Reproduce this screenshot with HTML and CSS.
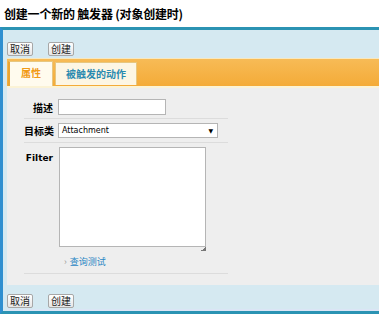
FILE: index.html
```html
<!DOCTYPE html>
<html lang="zh">
<head>
    <meta charset="UTF-8">
    <title>创建触发器</title>
    <link rel="stylesheet" href="styles.css">
</head>
<body>
    <h2 class="page-title">创建一个新的 触发器 (对象创建时)</h2>

    <div class="panel">
        <div class="toolbar">
            <button type="button" class="btn">取消</button>
            <button type="button" class="btn">创建</button>
        </div>

        <div class="tabs">
            <div class="tab active">属性</div>
            <div class="tab">被触发的动作</div>
        </div>

        <div class="tab-body">
            <div class="form-row">
                <label class="field-label" for="desc">描述</label>
                <input type="text" id="desc" class="text-input">
            </div>
            <div class="form-row">
                <label class="field-label" for="target">目标类</label>
                <div class="select-box" id="target">
                    <span>Attachment</span>
                    <span class="arrow">▼</span>
                </div>
            </div>
            <div class="form-row filter-row">
                <label class="field-label" for="filter">Filter</label>
                <div class="filter-field">
                    <div class="textarea-wrap">
                        <textarea id="filter" class="filter-input"></textarea>
                        <span class="grip"></span>
                    </div>
                    <a class="test-link" href="#"><span class="bullet">›</span>查询测试</a>
                </div>
            </div>
        </div>

        <div class="toolbar bottom">
            <button type="button" class="btn">取消</button>
            <button type="button" class="btn">创建</button>
        </div>
    </div>
</body>
</html>
```

FILE: styles.css
```css
body {
    margin: 0;
    padding: 0;
    background: #fff;
    font-family: "Noto Sans CJK SC", "DejaVu Sans", sans-serif;
    color: #000;
}

.page-title {
    margin: 0;
    height: 27px;
    padding: 6px 0 0 4px;
    box-sizing: border-box;
    font-size: 12px;
    line-height: 15px;
    font-weight: bold;
    letter-spacing: -0.2px;
}

.panel {
    border-top: 3px solid #2b93b3;
    border-bottom: 3px solid #2b93b3;
    border-left: 3px solid #2f8fd0;
    background: #d5e9f1;
    padding-left: 4px;
}

.toolbar {
    display: flex;
    gap: 15px;
    padding: 12px 0 2px 0;
}

.toolbar.bottom {
    padding: 9px 0 1px 0;
    border-bottom: 2px solid #dbe5f5;
}

.btn {
    font-family: "Noto Sans CJK SC", sans-serif;
    font-size: 10px;
    line-height: 12px;
    height: 14px;
    width: 26px;
    padding: 0;
    border: 1px solid #a7a7a7;
    border-radius: 2px;
    background: linear-gradient(#ffffff, #e6e6e6);
    color: #222;
}

.tabs {
    display: flex;
    gap: 2px;
    align-items: flex-end;
    height: 30px;
    padding-left: 1px;
    box-sizing: border-box;
    background: linear-gradient(#f7bb56, #f4ab38);
    border-top: 1px solid #f7e8c0;
    border-bottom: 2px solid #fbf3d6;
}

.tab {
    height: 23px;
    padding: 0;
    font-size: 10px;
    line-height: 21px;
    font-weight: bold;
    white-space: nowrap;
    color: #2a8ab0;
    background: #fdf6e4;
    border: 1px solid #e7c780;
    border-bottom: none;
    box-sizing: border-box;
}

.tab.active {
    height: 25px;
    width: 45px;
    text-align: center;
    color: #f19a14;
    background: #fffbee;
    border-left: 2px solid #e9a534;
}

.tab + .tab {
    width: 82px;
    text-align: center;
    margin-bottom: 1px;
}

.tab-body {
    background: #eeeeee;
    padding: 7px 0 11px 17px;
}

.form-row {
    display: flex;
    align-items: center;
    width: 204px;
    padding: 4px 0;
    border-bottom: 1px solid #dcdcdc;
    box-sizing: border-box;
}

.form-row:first-child {
    padding: 4px 0 3px;
}

.field-label {
    width: 29px;
    margin-right: 5px;
    text-align: right;
    font-size: 10px;
    font-weight: bold;
    white-space: nowrap;
}

.text-input {
    width: 108px;
    height: 16px;
    margin: 0;
    padding: 0;
    border: 1px solid #b5b5b5;
    background: #fff;
    box-sizing: border-box;
}

.select-box {
    display: flex;
    justify-content: space-between;
    align-items: center;
    width: 160px;
    height: 15px;
    flex: none;
    padding: 0 4px 0 3px;
    border: 1px solid #b5b5b5;
    background: #fff;
    box-sizing: border-box;
    font-family: "DejaVu Sans", sans-serif;
    font-size: 8px;
}

.select-box .arrow {
    font-size: 6px;
}

.filter-row {
    align-items: flex-start;
    padding: 4px 0 5px;
}

.filter-row .field-label {
    padding-top: 6px;
    font-family: "DejaVu Sans", sans-serif;
    font-size: 9px;
}

.filter-field {
    display: flex;
    flex-direction: column;
    padding-left: 1px;
}

.textarea-wrap {
    position: relative;
    width: 147px;
    height: 104px;
}

.filter-input {
    display: block;
    width: 147px;
    height: 100px;
    margin: 0;
    padding: 0;
    border: 1px solid #b5b5b5;
    background: #fff;
    box-sizing: border-box;
    resize: none;
}

.grip {
    position: absolute;
    right: 0;
    bottom: 0;
    width: 5px;
    height: 5px;
    background: linear-gradient(135deg, transparent 50%, #777 50%);
}

.test-link {
    margin: 5px 0 0 5px;
    font-size: 9px;
    line-height: 12px;
    color: #2a86c4;
    text-decoration: none;
}

.bullet {
    color: #999;
    margin-right: 3px;
}
```
